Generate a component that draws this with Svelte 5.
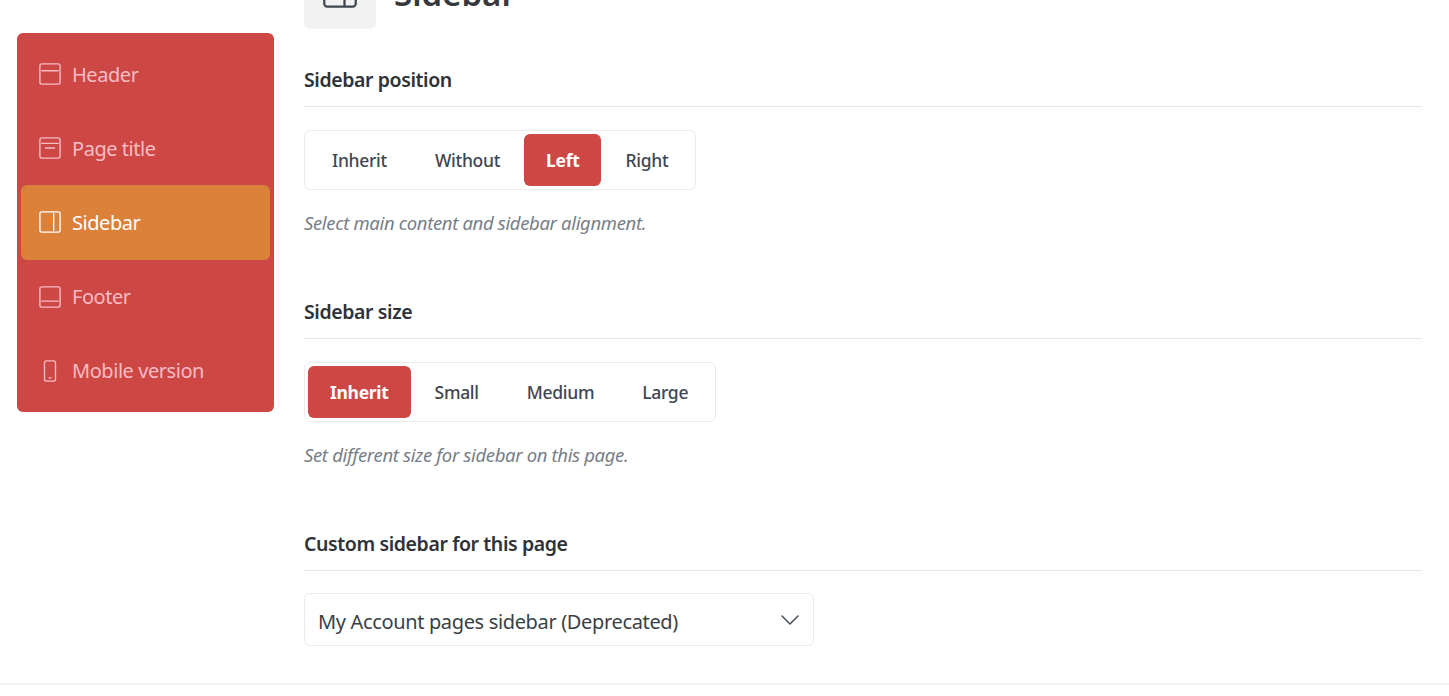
<script>
  const nav = [
    { label: 'Header', d: ['M3 8.5h18'], outline: true },
    { label: 'Page title', d: ['M3 7h18', 'M7 12h10'], outline: true },
    { label: 'Sidebar', d: ['M16 3v18'], outline: true, active: true },
    { label: 'Footer', d: ['M3 16.5h18'], outline: true },
    { label: 'Mobile version', mobile: true }
  ];
  const positions = ['Inherit', 'Without', 'Left', 'Right'];
  const sizes = ['Inherit', 'Small', 'Medium', 'Large'];
</script>

<div class="page">
  <aside class="nav">
    {#each nav as item}
      <div class="item" class:active={item.active}>
        <svg viewBox="0 0 24 24" class="icon" fill="none" stroke="currentColor" stroke-width="1.5" stroke-linecap="round" stroke-linejoin="round">
          {#if item.mobile}
            <rect x="6" y="1" width="12" height="22" rx="2" />
            <path d="M11 19.5h2" />
          {:else}
            <rect x="1" y="1" width="22" height="22" rx="2" />
            {#each item.d as d}<path {d} />{/each}
          {/if}
        </svg>
        <span>{item.label}</span>
      </div>
    {/each}
  </aside>

  <main class="content">
    <div class="title">
      <div class="title-icon">
        <svg viewBox="0 0 24 24" width="36" height="36" fill="none" stroke="#3f4650" stroke-width="1.5">
          <rect x="1.5" y="3" width="21" height="18" rx="2" />
          <path d="M15 3v18" />
        </svg>
      </div>
      <h1>Sidebar</h1>
    </div>

    <section class="first">
      <h2>Sidebar position</h2>
      <div class="group">
        {#each positions as p}
          <button class:on={p === 'Left'}>{p}</button>
        {/each}
      </div>
      <p class="hint">Select main content and sidebar alignment.</p>
    </section>

    <section>
      <h2>Sidebar size</h2>
      <div class="group">
        {#each sizes as s}
          <button class:on={s === 'Inherit'}>{s}</button>
        {/each}
      </div>
      <p class="hint">Set different size for sidebar on this page.</p>
    </section>

    <section>
      <h2>Custom sidebar for this page</h2>
      <div class="select">
        <span class="value">My Account pages sidebar (Deprecated)</span>
        <svg viewBox="0 0 20 12" width="20" height="12" fill="none" stroke="#4b525b" stroke-width="1.6" stroke-linecap="round" stroke-linejoin="round">
          <path d="M2 2l8 8 8-8" />
        </svg>
      </div>
    </section>
  </main>
</div>
<div class="bottom"></div>

<style>
  :global(body) {
    margin: 0;
    background: #fff;
    overflow: hidden;
    font-family: "Noto Sans", "Open Sans", sans-serif;
  }
  .page {
    display: flex;
    align-items: flex-start;
    height: 683px;
    overflow: hidden;
    padding-left: 17px;
    padding-right: 27px;
    gap: 30px;
    box-sizing: border-box;
    color: #2f3237;
  }
  .bottom {
    height: 2px;
    background: #f3f3f3;
  }
  .nav {
    flex: 0 0 257px;
    box-sizing: border-box;
    margin-top: 33px;
    padding: 4px;
    height: 379px;
    background: #cd4745;
    border-radius: 6px;
  }
  .item {
    display: flex;
    align-items: center;
    gap: 11px;
    height: 74.2px;
    padding-left: 18px;
    border-radius: 6px;
    color: #f6bcc4;
    font-size: 20px;
    letter-spacing: -0.45px;
  }
  .item.active {
    background: #dc813a;
    color: #fff;
  }
  .icon {
    width: 22px;
    height: 22px;
    flex: none;
  }
  .content {
    flex: 1;
    min-width: 0;
    margin-top: -43px;
  }
  .title {
    display: flex;
    align-items: center;
    gap: 18px;
    height: 72px;
  }
  .title-icon {
    width: 72px;
    height: 72px;
    background: #f2f2f2;
    border-radius: 6px;
    display: flex;
    align-items: center;
    justify-content: center;
  }
  h1 {
    margin: 0;
    font-size: 33px;
    font-weight: 600;
    color: #35383d;
  }
  section {
    height: 232px;
  }
  section.first {
    margin-top: 29px;
  }
  h2 {
    margin: 0 0 23px;
    height: 49px;
    line-height: 44px;
    box-sizing: border-box;
    border-bottom: 1px solid #e8e8e8;
    font-size: 19.5px;
    font-weight: 600;
    letter-spacing: -0.4px;
    color: #2f3237;
  }
  .group {
    display: inline-flex;
    padding: 3px;
    height: 60px;
    box-sizing: border-box;
    border: 1px solid #ebebeb;
    border-radius: 6px;
    background: #fff;
  }
  button {
    border: 0;
    background: transparent;
    font: inherit;
    font-size: 17.5px;
    font-weight: 500;
    letter-spacing: -0.3px;
    color: #3f4650;
    padding: 0 24px;
    border-radius: 6px;
    height: 52px;
  }
  button.on {
    background: #cd4745;
    color: #fff;
    font-weight: 700;
    padding: 0 22px;
  }
  .hint {
    margin: 20px 0 0;
    font-size: 18.5px;
    font-style: italic;
    letter-spacing: -0.35px;
    line-height: 26px;
    color: #777e87;
  }
  .select {
    display: flex;
    align-items: center;
    justify-content: space-between;
    box-sizing: border-box;
    width: 510px;
    height: 53px;
    margin-top: -1px;
    padding: 0 13px;
    border: 1px solid #ebebeb;
    border-radius: 6px;
  }
  .value {
    display: block;
    font-size: 20px;
    letter-spacing: -0.35px;
    height: 26px;
    line-height: 28px;
    overflow: hidden;
    color: #3a3f46;
    margin-top: 3px;
  }
</style>
